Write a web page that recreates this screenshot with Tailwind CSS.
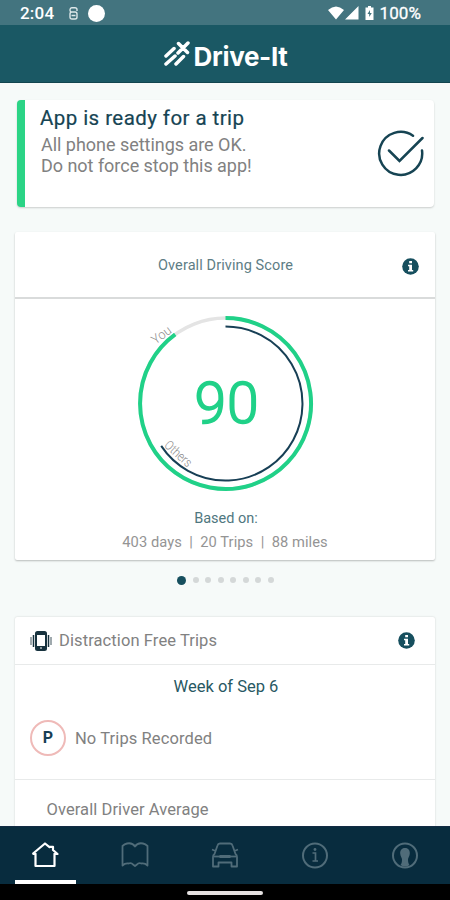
<!DOCTYPE html>
<html lang="en">
<head>
    <meta charset="UTF-8">
    <meta name="viewport" content="width=device-width, initial-scale=1.0">
    <title>Drive-It</title>
    <script src="https://cdn.jsdelivr.net/npm/@tailwindcss/browser@4"></script>
</head>
<body class="bg-[#f6faf9] font-['Roboto',sans-serif]">
    <div class="w-[450px] h-[900px] flex flex-col overflow-hidden">
        <!-- Status bar -->
        <div class="h-[25px] shrink-0 bg-[#43747f] text-white flex items-center justify-between pl-5 pr-[29px] pt-px">
            <div class="flex items-center">
                <span class="text-[17px] leading-none font-medium w-[49px] tracking-[0.2px]">2:04</span>
                <svg class="w-[9px] h-[13px] mr-[10px]" viewBox="0 0 9 13" fill="none" stroke="#dce7e9" stroke-width="1.4">
                    <path d="M8 4V2.5Q8 .8 6 .8H3Q1 .8 1 3T3 5H6Q8 5 8 7V10Q8 12 6 12H3Q1 12 1 10V7Q1 5 3 5M2.5 8.5H6.5"/>
                </svg>
                <span class="w-[17px] h-[17px] rounded-full bg-white"></span>
            </div>
            <div class="flex items-center">
                <svg class="w-[32px] h-[14px] mr-[5px]" viewBox="0 0 32 14" fill="white">
                    <path d="M0 4Q8 -3 16 4L8 13.5ZM17 13.5L30.5 0V13.5Z"/>
                </svg>
                <svg class="w-[9px] h-[14px] mr-[5px]" viewBox="0 0 9 14">
                    <path d="M3 0H6V1.5H8.5V14H.5V1.5H3Z" fill="white"/>
                    <path d="M5 4L2.5 8H4.2V11L6.8 7H5Z" fill="#43747f"/>
                </svg>
                <span class="text-[17px] leading-none tracking-[0.1px] [-webkit-text-stroke:0.3px]">100%</span>
            </div>
        </div>

        <!-- App header -->
        <div class="h-[58px] shrink-0 bg-[#1a5864] border-b border-[#12454f] flex items-center justify-center gap-[4px]">
            <svg class="w-[27px] h-[27px]" viewBox="0 0 27 27" fill="none" stroke="white" stroke-width="3.5" stroke-linecap="round">
                <path d="M3 16L11 8.5M3 24L12 16M13 24L20.5 16.5M15 13L25 3M15.500 3.500L24.500 12.500"/>
            </svg>
            <span class="pt-[7px] font-['Inter',sans-serif] font-bold text-white text-[26px] leading-none tracking-[-0.35px]">Drive-It</span>
        </div>

        <!-- Content -->
        <div class="h-[743px] shrink-0 overflow-hidden pt-[17px] px-[15px]">
            <!-- Phone settings status -->
            <div class="ml-[2px] mr-[1px] h-[107px] bg-white rounded-[4px] border-l-8 border-[#2bd486] shadow-[0_1px_2px_rgba(0,0,0,0.18)] flex justify-between pl-[15px] pr-[10px]">
                <div class="pt-[6px]">
                    <h1 class="text-[20.500px] leading-[24px] text-[#164453] tracking-[0.43px] [-webkit-text-stroke:0.2px]">App is ready for a trip</h1>
                    <p class="pl-px pt-[4px] text-[18px] leading-[21px] text-[#818181] tracking-[-0.03px]">All phone settings are OK.<br>Do not force stop this app!</p>
                </div>
                <svg class="w-[48px] h-[48px] mt-[30px]" viewBox="0 0 48 48" fill="none" stroke="#164453" stroke-width="2.5" stroke-linecap="round">
                    <path d="M37 5.800A21.500 21.500 0 1 0 46 20.500M13 20.500L23.500 31L46.500 8"/>
                </svg>
            </div>

            <!-- Driving score -->
            <div class="mt-[25px] h-[328px] bg-white rounded-[2px] shadow-[0_1px_2px_rgba(0,0,0,0.25)]">
                <div class="h-[67px] border-b-2 border-[#d9dbdb] flex items-center pl-[143px] pr-[16px] pt-[3px]">
                    <span class="text-[14.500px] text-[#5d7d85] tracking-[0.1px]">Overall Driving Score</span>
                    <svg class="ml-auto w-[17px] h-[17px]" viewBox="0 0 17 17">
                        <circle cx="8.500" cy="8.500" r="8.300" fill="#164f5e"/>
                        <path d="M7.200 3H10V5.200H7.200ZM6 6.700H10V12H11.200V13.500H6V12H7.200V8.200H6Z" fill="white"/>
                    </svg>
                </div>
                <svg class="block mx-auto w-[200px] h-[200px]" viewBox="125 299 200 200" font-family="Roboto, sans-serif">
                    <g fill="none">
                        <circle cx="225.500" cy="403.500" r="85.500" stroke="#e4e4e4" stroke-width="3.500"/>
                        <path d="M225.500 318A85.500 85.500 0 1 1 175.200 334.400" stroke="#20d188" stroke-width="4"/>
                        <path d="M225.500 326.500A77 77 0 1 1 161.200 445.900" stroke="#173f55" stroke-width="2"/>
                    </g>
                    <text x="226.500" y="423" text-anchor="middle" font-size="57" font-weight="300" fill="#20d188" stroke="#20d188" stroke-width="1.600" textLength="64">90</text>
                    <text transform="translate(164 338.500) rotate(-37)" text-anchor="middle" font-size="13" textLength="21" lengthAdjust="spacingAndGlyphs" font-weight="300" fill="#8c8c8c">You</text>
                    <text transform="translate(175.500 457) rotate(42)" text-anchor="middle" font-size="13" textLength="32" lengthAdjust="spacingAndGlyphs" font-weight="300" fill="#8c8c8c">Others</text>
                </svg>
                <p class="mt-[10px] text-center text-[14.500px] leading-[20px] text-[#4f7780] pl-[2px]">Based on:</p>
                <p class="mt-[3px] text-center text-[14.700px] leading-[20px] text-[#949494] tracking-[0.06px] whitespace-pre">403 days  |  20 Trips  |  88 miles</p>
            </div>

            <!-- Page dots -->
            <div class="h-[40px] flex items-center justify-center gap-[6.500px] pl-[1px]">
                <span class="w-[9px] h-[9px] rounded-full bg-[#164f5e]"></span>
                <span class="w-[6px] h-[6px] rounded-full bg-[#d4d8d8]"></span>
                <span class="w-[6px] h-[6px] rounded-full bg-[#d4d8d8]"></span>
                <span class="w-[6px] h-[6px] rounded-full bg-[#d4d8d8]"></span>
                <span class="w-[6px] h-[6px] rounded-full bg-[#d4d8d8]"></span>
                <span class="w-[6px] h-[6px] rounded-full bg-[#d4d8d8]"></span>
                <span class="w-[6px] h-[6px] rounded-full bg-[#d4d8d8]"></span>
                <span class="w-[6px] h-[6px] rounded-full bg-[#d4d8d8]"></span>
            </div>

            <!-- Distraction free trips -->
            <div class="mt-[17px] h-[220px] bg-white rounded-[2px] shadow-[0_0_2px_rgba(0,0,0,0.18)]">
                <div class="h-[48px] border-b border-[#e8eaea] flex items-center pl-[15px] pr-[20px]">
                    <svg class="w-[22px] h-[22px] mr-[7px]" viewBox="0 0 22 22" fill="none" stroke="#17323e">
                        <rect x="6" y="2" width="10" height="18" rx="1.500" stroke-width="2"/>
                        <path d="M6 3.500H16M6 17.500H16" stroke-width="3"/>
                        <path d="M3.500 5V17M18.500 5V17" stroke-width="1.500"/>
                        <path d="M1 7V15M21 7V15" stroke-width="1.300" stroke="#6d7c83"/>
                        <path d="M10 18H12" stroke="white"/>
                    </svg>
                    <span class="pt-[2px] text-[16.500px] text-[#818181] tracking-[0.1px]">Distraction Free Trips</span>
                    <svg class="ml-auto w-[17px] h-[17px]" viewBox="0 0 17 17">
                        <circle cx="8.500" cy="8.500" r="8.300" fill="#164f5e"/>
                        <path d="M7.200 3H10V5.200H7.200ZM6 6.700H10V12H11.200V13.500H6V12H7.200V8.200H6Z" fill="white"/>
                    </svg>
                </div>
                <p class="pt-[12px] text-center text-[16.500px] leading-[20px] text-[#285863] pl-[2px]">Week of Sep 6</p>
                <div class="h-[83px] flex items-center border-b border-[#e8eaea] pl-[15px]">
                    <span class="w-[36px] h-[36px] rounded-full border-2 border-[#efbab8] flex items-center justify-center text-[16px] font-bold text-[#173f55]">P</span>
                    <span class="ml-[9px] pt-[2px] text-[16.500px] text-[#818181] tracking-[0.1px]">No Trips Recorded</span>
                </div>
                <p class="pt-[20px] pl-[31.500px] text-[16.500px] leading-[20px] text-[#818181] tracking-[0.08px]">Overall Driver Average</p>
            </div>
        </div>

        <!-- Bottom navigation -->
        <div class="h-[58px] shrink-0 bg-[#082c3e] border-t border-[#132b43] grid grid-cols-5 text-[#506c79]">
            <div class="flex flex-col items-center justify-between pt-[15px]">
                <svg class="w-[28px] h-[27px]" viewBox="0 0 28 27" fill="none" stroke="white" stroke-width="2.200" stroke-linejoin="round">
                    <path d="M4.500 12V24H23.500V12M1.500 12L14 1.500L18.500 5.200V4.800H22V8L26.500 12H22.500M1.500 12H5.500"/>
                </svg>
                <span class="w-[61px] h-[4px] bg-white"></span>
            </div>
            <div class="flex justify-center pt-[15px]">
                <svg class="w-[28px] h-[27px]" viewBox="0 0 28 27" fill="none" stroke="currentColor" stroke-width="1.800" stroke-linejoin="round">
                    <path d="M14 4.500C11.500 .5 8.500 1 6 1.500Q3.500 2 1.500 4V23.500Q4 21 7.500 21.500Q10.500 20.500 12 22.500L14 24L16 22.500Q17.500 20.500 20.500 21.500Q24 21 26.500 23.500V4Q24.500 2 22 1.500C19.500 1 16.500 .5 14 4.500Z"/>
                </svg>
            </div>
            <div class="flex justify-center pt-[15px]">
                <svg class="w-[28px] h-[27px]" viewBox="0 0 28 27" fill="none" stroke="currentColor" stroke-width="1.800" stroke-linejoin="round">
                    <path d="M3.500 12L6.500 3.500Q7 1.500 9 1.500H19Q21 1.500 21.500 3.500L24.500 12Q26 13 26 15V24.500H20.500V20.500H7.500V24.500H2V15Q2 13 3.500 12ZM1 7.500L4.500 9M27 7.500L23.500 9"/>
                    <path d="M3 14.500H25"/>
                    <path d="M8.500 14.500H19.500" stroke-width="3"/>
                </svg>
            </div>
            <div class="flex justify-center pt-[15px]">
                <svg class="w-[28px] h-[27px]" viewBox="0 0 28 27" fill="none" stroke="currentColor">
                    <circle cx="14" cy="13.500" r="12" stroke-width="2"/>
                    <path d="M11.500 11H14.500V19M11.500 19H17" stroke-width="1.700"/>
                    <circle cx="14" cy="7.500" r="1.400" fill="currentColor" stroke="none"/>
                </svg>
            </div>
            <div class="flex justify-center pt-[15px]">
                <svg class="w-[28px] h-[27px]" viewBox="0 0 28 27">
                    <circle cx="14" cy="13.500" r="12" fill="none" stroke="currentColor" stroke-width="2"/>
                    <path d="M14 6C10.500 6 9 8.500 9.200 11.500C9.400 14.500 11 15.500 11 17.500C11 20 10.500 22 9.500 23Q14 26 18.500 23C17.500 22 17 20 17 17.500C17 15.500 18.600 14.500 18.800 11.500C19 8.500 17.500 6 14 6Z" fill="currentColor"/>
                </svg>
            </div>
        </div>

        <!-- Gesture bar -->
        <div class="h-[16px] shrink-0 bg-black flex justify-center pt-[7px]">
            <span class="w-[76px] h-[4px] rounded-full bg-[#e6e2e2]"></span>
        </div>
    </div>
</body>
</html>
